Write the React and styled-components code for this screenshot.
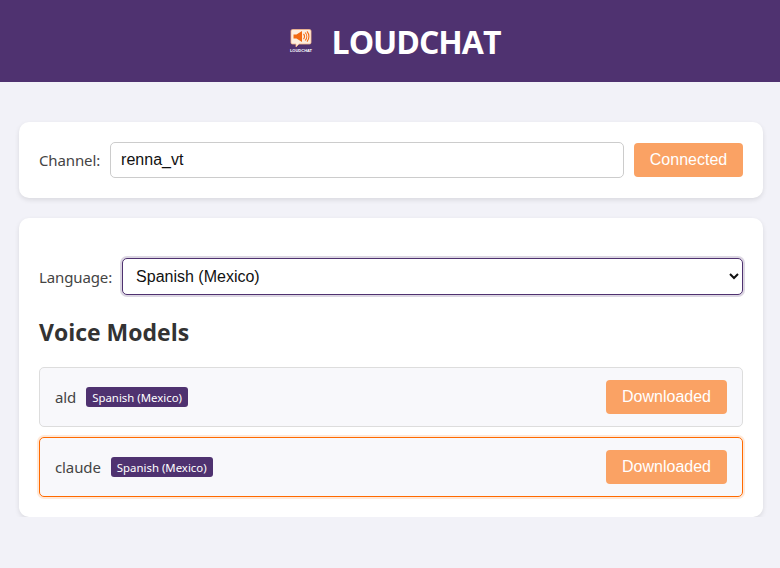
import React from 'react';
import styled, {createGlobalStyle} from "styled-components";

const GlobalStyle = createGlobalStyle`
	body {
		margin: 0;
		background-color: #f2f2f8;
		font-family: "Noto Sans", sans-serif;
		color: #333;
	}
`;

const Header = styled.header`
	height: 82px;
	padding-left: 8px;
	box-sizing: border-box;
	background-color: #4f3270;
	display: flex;
	align-items: center;
	justify-content: center;
	gap: 18px;
`;

const Title = styled.h1`
	margin: 0;
	font-family: "Open Sans", sans-serif;
	font-size: 32px;
	font-weight: 700;
	letter-spacing: -1px;
	color: white;
`;

const Main = styled.main`
	padding: 40px 17px 0 19px;
	display: flex;
	flex-direction: column;
	gap: 20px;
`;

const Card = styled.section`
	background-color: white;
	border-radius: 10px;
	box-shadow: 0 2px 5px rgba(0, 0, 0, 0.1);
	padding: 20px;
`;

const Row = styled.div`
	display: flex;
	align-items: center;
	gap: 10px;
`;

const Label = styled.label`
	font-size: 15px;
	letter-spacing: -0.12px;
	color: #444;
`;

const TextInput = styled.input`
	flex: 1;
	min-width: 0;
	height: 36px;
	box-sizing: border-box;
	padding: 0 10px;
	border: 1px solid #ccc;
	border-radius: 5px;
	font-family: "Liberation Sans", sans-serif;
	font-size: 16px;
	color: #111;
`;

const Button = styled.button`
	height: 34px;
	width: ${props => props.$width}px;
	padding: 0;
	border: none;
	border-radius: 4px;
	background-color: #faa264;
	color: white;
	font-family: "Liberation Sans", sans-serif;
	font-size: 16px;
`;

const LanguageRow = styled(Row)`
	margin-top: 20px;
`;

const LanguageSelect = styled.select`
	flex: 1;
	min-width: 0;
	height: 37px;
	box-sizing: border-box;
	padding: 0 9px;
	border: 1px solid #4f3270;
	border-radius: 5px;
	background-color: white;
	box-shadow: 0 0 0 2px rgba(79, 50, 112, 0.2);
	font-family: "Liberation Sans", sans-serif;
	font-size: 16px;
	color: #111;
`;

const Heading = styled.h2`
	margin: 22px 0 20px;
	font-family: "Open Sans", sans-serif;
	font-size: 23px;
	line-height: 30px;
	font-weight: 700;
	color: #333;
`;

const ModelList = styled.div`
	display: flex;
	flex-direction: column;
	gap: 10px;
`;

const Model = styled.div`
	height: 60px;
	box-sizing: border-box;
	padding: 0 15px;
	display: flex;
	align-items: center;
	justify-content: space-between;
	background-color: #f8f8fb;
	border-radius: 5px;
	border: 1px solid ${props => props.$active ? "#ff6a00" : "#ddd"};
	box-shadow: ${props => props.$active ? "0 0 0 2px rgba(255, 106, 0, 0.15)" : "none"};
`;

const ModelInfo = styled.div`
	display: flex;
	align-items: center;
	gap: 10px;
`;

const ModelName = styled.span`
	font-size: 15px;
	letter-spacing: -0.1px;
	color: #444;
`;

const Badge = styled.span`
	height: 20px;
	padding: 0 6px;
	display: flex;
	align-items: center;
	border-radius: 3px;
	background-color: #4f3270;
	color: white;
	font-size: 11.4px;
`;

const Logo = () => (
	<svg width="26" height="26" viewBox="0 0 26 26">
		<path d="M4.500 1.500h17a1.500 1.500 0 0 1 1.500 1.500v11.500a1.500 1.500 0 0 1-1.500 1.500H11l-3 3v-3H4.500A1.500 1.500 0 0 1 3 14.500V3a1.500 1.500 0 0 1 1.500-1.500z" fill="#fdeee0" stroke="#f9b98a" strokeWidth="0.800"/>
		<path d="M5.500 6.500h3L14 3v11L8.500 10.500h-3z" fill="#f26a12"/>
		<path d="M15.500 6a3.500 3.500 0 0 1 0 5M17.200 4.500a6 6 0 0 1 0 8M19 3.300a8 8 0 0 1 0 10.400" fill="none" stroke="#f26a12" strokeWidth="1.100"/>
		<text x="13" y="23.800" textAnchor="middle" fontFamily="Liberation Sans, sans-serif" fontSize="4" fontWeight="700" fill="white">LOUDCHAT</text>
	</svg>
);

const models = [
	{name: "ald", active: false},
	{name: "claude", active: true},
];

export default function App() {
	return (
		<>
			<GlobalStyle/>
			<Header>
				<Logo/>
				<Title>LOUDCHAT</Title>
			</Header>
			<Main>
				<Card>
					<Row>
						<Label>Channel:</Label>
						<TextInput defaultValue="renna_vt"/>
						<Button $width={109}>Connected</Button>
					</Row>
				</Card>
				<Card>
					<LanguageRow>
						<Label>Language:</Label>
						<LanguageSelect defaultValue="es-MX">
							<option value="es-MX">Spanish (Mexico)</option>
						</LanguageSelect>
					</LanguageRow>
					<Heading>Voice Models</Heading>
					<ModelList>
						{models.map(model => (
							<Model key={model.name} $active={model.active}>
								<ModelInfo>
									<ModelName>{model.name}</ModelName>
									<Badge>Spanish (Mexico)</Badge>
								</ModelInfo>
								<Button $width={121}>Downloaded</Button>
							</Model>
						))}
					</ModelList>
				</Card>
			</Main>
		</>
	)
}
